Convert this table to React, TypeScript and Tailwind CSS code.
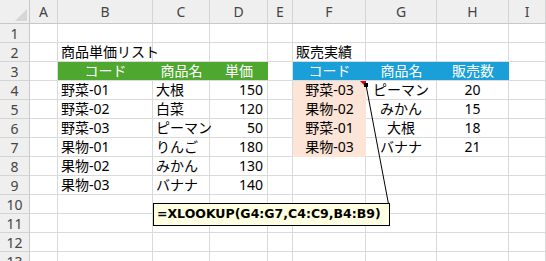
import React from "react";

const COLS = ["A", "B", "C", "D", "E", "F", "G", "H", "I"];
const COL_W = [28, 95, 57, 58, 25, 73, 71, 72, 37];

type Cell = {
  text?: string;
  align?: "left" | "center" | "right";
  bg?: string;
  white?: boolean;
};

const products: [string, string, string][] = [
  ["野菜-01", "大根", "150"],
  ["野菜-02", "白菜", "120"],
  ["野菜-03", "ピーマン", "50"],
  ["果物-01", "りんご", "180"],
  ["果物-02", "みかん", "130"],
  ["果物-03", "バナナ", "140"],
];

const sales: [string, string, string][] = [
  ["野菜-03", "ピーマン", "20"],
  ["果物-02", "みかん", "15"],
  ["野菜-01", "大根", "18"],
  ["果物-03", "バナナ", "21"],
];

function buildSheet(): Record<string, Cell> {
  const s: Record<string, Cell> = {};
  s["B2"] = { text: "商品単価リスト" };
  s["F2"] = { text: "販売実績" };
  const green = "bg-[#4ea72e]";
  const blue = "bg-[#1a9fd9]";
  s["B3"] = { text: "コード", align: "center", bg: green, white: true };
  s["C3"] = { text: "商品名", align: "center", bg: green, white: true };
  s["D3"] = { text: "単価", align: "center", bg: green, white: true };
  s["F3"] = { text: "コード", align: "center", bg: blue, white: true };
  s["G3"] = { text: "商品名", align: "center", bg: blue, white: true };
  s["H3"] = { text: "販売数", align: "center", bg: blue, white: true };
  products.forEach(([code, name, price], i) => {
    const r = i + 4;
    s["B" + r] = { text: code };
    s["C" + r] = { text: name };
    s["D" + r] = { text: price, align: "right" };
  });
  sales.forEach(([code, name, qty], i) => {
    const r = i + 4;
    s["F" + r] = { text: code, align: "center", bg: "bg-[#fce4d6]" };
    s["G" + r] = { text: name, align: "center" };
    s["H" + r] = { text: qty, align: "center" };
  });
  return s;
}

const sheet = buildSheet();

const font = {
  fontFamily: '"Noto Sans", "Noto Sans CJK JP", sans-serif',
};

export default function App() {
  const rows = Array.from({ length: 13 }, (_, i) => i + 1);
  return (
    <div className="relative h-[261px] w-[546px] overflow-hidden bg-white" style={font}>
      {/* column header strip */}
      <div className="flex h-[24px] bg-[#efefef]">
        <div className="relative w-[30px] shrink-0 border-r border-b border-[#c8c8c8]">
          {/* select-all corner */}
          <svg className="absolute left-[15px] top-[9px]" width="12" height="12" viewBox="0 0 12 12">
            <polygon points="12,0 12,12 0,12" fill="#d6d6d6" />
          </svg>
        </div>
        {COLS.map((c, i) => (
          <div
            key={c}
            style={{ width: COL_W[i] }}
            className="flex shrink-0 items-center justify-center border-r border-b border-[#d4d4d4] border-b-[#c8c8c8] text-[14px] text-[#444]"
          >
            {c}
          </div>
        ))}
      </div>

      {rows.map((r) => (
        <div key={r} className="flex h-[19px]">
          <div className="flex w-[30px] shrink-0 items-center justify-center border-r border-b border-[#d4d4d4] border-r-[#c8c8c8] bg-[#efefef] text-[14px] text-[#444]">
            {r}
          </div>
          {COLS.map((c, i) => {
            const cell = sheet[c + r];
            const align =
              cell?.align === "center"
                ? "justify-center"
                : cell?.align === "right"
                ? "justify-end pr-[4px]"
                : "justify-start pl-[3px]";
            const colored = cell?.bg;
            return (
              <div
                key={c}
                style={{ width: COL_W[i] }}
                className={`flex shrink-0 items-center whitespace-nowrap text-[14px] leading-none ${align} ${
                  colored ? cell!.bg : "border-r border-b border-[#dadada]"
                } ${colored && cell?.white ? "border-b border-[#dadada]" : ""} ${
                  colored && !cell?.white ? "border-b border-[#fce4d6]" : ""
                } ${cell?.white ? "text-white" : "text-black"}`}
              >
                {cell?.text ?? ""}
              </div>
            );
          })}
        </div>
      ))}

      {/* comment indicator on F4 */}
      <div className="absolute left-[360px] top-[81px] h-0 w-0 border-t-[6px] border-l-[6px] border-t-[#e00000] border-l-transparent" />

      {/* leader line from the indicator to the note */}
      <svg className="pointer-events-none absolute left-0 top-0" width="546" height="261">
        <line x1="366" y1="85" x2="388.5" y2="204" stroke="#000" strokeWidth="1" />
        <rect x="364" y="83" width="4" height="4" fill="#000" />
      </svg>

      {/* formula note */}
      <div className="absolute left-[153px] top-[203px] flex h-[23px] w-[237px] items-center border border-black bg-[#ffffe1] pl-[3px]">
        <span
          className="whitespace-nowrap text-[12.5px] font-bold text-black"
          style={{ fontFamily: '"DejaVu Sans", sans-serif' }}
        >
          =XLOOKUP(G4:G7,C4:C9,B4:B9)
        </span>
      </div>
    </div>
  );
}
